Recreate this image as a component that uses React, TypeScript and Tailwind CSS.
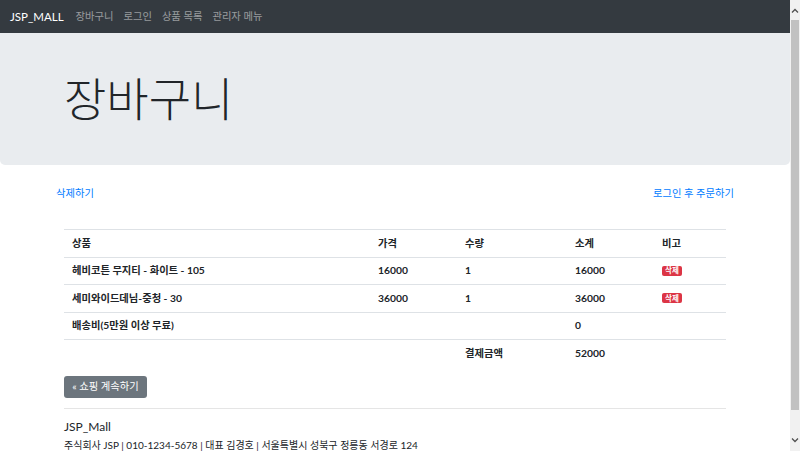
import React from "react";

const F = { fontFamily: 'Lato, "Noto Sans CJK KR", sans-serif' };

function Row({ cells }: { cells: React.ReactNode[] }) {
  const widths = ["w-[306px]", "w-[87px]", "w-[110px]", "w-[87px]", "w-[72px]"];
  return (
    <div className="flex h-[27.6px] shrink-0 items-center border-t border-[#dee2e6] text-[10.3px] font-bold text-[#212529]">
      {cells.map((c, i) => (
        <div key={i} className={`${widths[i]} flex items-center px-[8px]`}>
          {c}
        </div>
      ))}
    </div>
  );
}

function Badge() {
  return (
    <span className="inline-flex h-[10px] items-center rounded-[2px] bg-[#dc3545] px-[3px] text-[7.5px] font-bold leading-none text-white">
      삭제
    </span>
  );
}

export default function App() {
  return (
    <div className="flex h-[451px] w-[800px] overflow-hidden bg-white" style={F}>
      <div className="flex w-[790px] flex-col">
        <nav className="flex h-[33px] shrink-0 items-center bg-[#343a40] px-[10px]">
          <span className="mr-[12px] text-[11.5px] text-white">JSP_MALL</span>
          <div className="flex gap-[10px] text-[10.3px] text-[#ffffff80]">
            <span>장바구니</span>
            <span>로그인</span>
            <span>상품 목록</span>
            <span>관리자 메뉴</span>
          </div>
        </nav>
        <div className="flex h-[132px] shrink-0 items-center rounded-b-[5px] bg-[#e9ecef] pl-[64px]">
          <h1 className="text-[46px] font-light leading-none text-[#212529]">장바구니</h1>
        </div>
        <div className="mt-[21px] flex h-[16px] shrink-0 items-center justify-between px-[56px] text-[10.3px] text-[#007bff]">
          <span>삭제하기</span>
          <span>로그인 후 주문하기</span>
        </div>
        <div className="mx-[64px] mt-[27px] w-[662px] shrink-0">
          <Row cells={["상품", "가격", "수량", "소계", "비고"]} />
          <Row cells={["헤비코튼 무지티 - 화이트 - 105", "16000", "1", "16000", <Badge />]} />
          <Row cells={["세미와이드데님-중청 - 30", "36000", "1", "36000", <Badge />]} />
          <Row cells={["배송비(5만원 이상 무료)", "", "", "0", ""]} />
          <Row cells={["", "", "결제금액", "52000", ""]} />
        </div>
        <div className="mx-[64px] mt-[9px] flex shrink-0">
          <span className="flex h-[22px] w-[83px] items-center justify-center rounded-[3px] bg-[#6c757d] text-[10.3px] text-white">
            « 쇼핑 계속하기
          </span>
        </div>
        <div className="mx-[64px] mt-[10px] w-[662px] shrink-0 border-t border-[#e5e5e5]" />
        <div className="mx-[64px] mt-[10px] shrink-0 text-[12px] leading-[16px] text-[#212529]">JSP_Mall</div>
        <div className="mx-[64px] mt-[3px] shrink-0 whitespace-nowrap text-[10px] leading-[14px] text-[#212529]">
          주식회사 JSP | 010-1234-5678 | 대표 김경호 | 서울특별시 성북구 정릉동 서경로 124
        </div>
      </div>
      <div className="relative w-[10px] bg-[#f1f1f1]">
        <svg className="absolute left-[1px] top-[8px]" width="8" height="6" viewBox="0 0 8 6">
          <path d="M1 4.5 L4 1.5 L7 4.5" fill="none" stroke="#505050" strokeWidth="1.3" />
        </svg>
        <div className="absolute left-[1px] top-[20px] h-[390px] w-[8px] bg-[#c1c1c1]" />
        <svg className="absolute left-[1px] top-[437px]" width="8" height="6" viewBox="0 0 8 6">
          <path d="M1 1.5 L4 4.5 L7 1.5" fill="none" stroke="#505050" strokeWidth="1.3" />
        </svg>
      </div>
    </div>
  );
}
